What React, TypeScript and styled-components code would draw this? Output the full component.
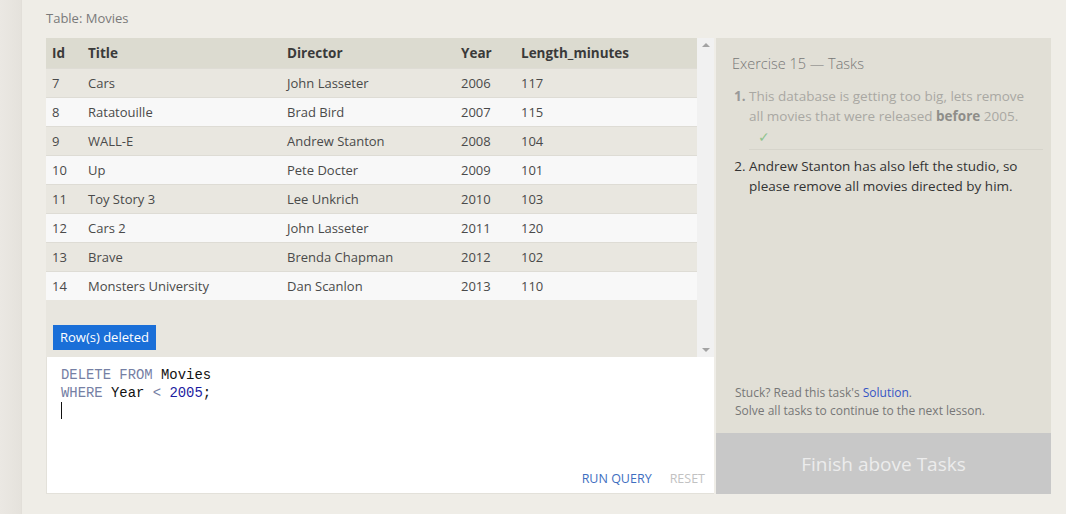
import React from "react";
import styled, { createGlobalStyle } from "styled-components";

const Global = createGlobalStyle`
  html, body { margin: 0; padding: 0; background: #efede7; }
  body { font-family: "Open Sans", "Noto Sans", sans-serif; }
  * { box-sizing: border-box; }
`;

const Page = styled.div`
  display: flex;
  width: 1066px;
  height: 514px;
  overflow: hidden;
`;

const SideStrip = styled.div`
  width: 22px;
  flex: none;
  background: linear-gradient(to right, #ebe8e3, #e5e2dc);
  border-right: 1px solid #e2dfd9;
`;

const Main = styled.div`
  flex: 1;
  padding: 0 14px 0 24px;
  display: flex;
  flex-direction: column;
`;

const Caption = styled.div`
  height: 38px;
  padding-top: 9px;
  font-size: 13px;
  color: #7a7a7a;
`;

const Workspace = styled.div`
  display: flex;
  gap: 2px;
  height: 456px;
`;

const LeftCol = styled.div`
  width: 668px;
  display: flex;
  flex-direction: column;
`;

const Results = styled.div`
  height: 319px;
  display: flex;
  background: #e8e6df;
`;

const TableArea = styled.div`
  flex: 1;
  display: flex;
  flex-direction: column;
  justify-content: space-between;
`;

const Table = styled.table`
  width: 100%;
  border-collapse: collapse;
  font-size: 13px;
`;

const Th = styled.th<{ w: number }>`
  width: ${(p) => p.w}px;
  text-align: left;
  font-weight: 700;
  font-size: 13.5px;
  color: #3a3a3a;
  height: 30px;
  padding: 0 6px;
  background: #dcdbd0;
`;

const Tr = styled.tr<{ alt: boolean }>`
  background: ${(p) => (p.alt ? "#f8f8f8" : "#e9e7e0")};
  border-top: 1px solid #dedcd5;
`;

const Td = styled.td`
  height: 29px;
  padding: 0 6px;
  color: #4a4a4a;
  white-space: nowrap;
`;

const Badge = styled.div`
  align-self: flex-start;
  margin: 0 0 7px 7px;
  background: #1a6fd8;
  color: #fff;
  font-size: 13px;
  height: 25px;
  line-height: 25px;
  padding: 0 7px;
`;

const Scrollbar = styled.div`
  width: 17px;
  background: #f1f1f1;
  display: flex;
  flex-direction: column;
  justify-content: space-between;
  align-items: center;
  padding: 5px 0;
`;

const Arrow = styled.div<{ down?: boolean }>`
  width: 0;
  height: 0;
  border-left: 4px solid transparent;
  border-right: 4px solid transparent;
  ${(p) =>
    p.down
      ? "border-top: 4px solid #a3a3a3;"
      : "border-bottom: 4px solid #a3a3a3;"}
`;

const Editor = styled.div`
  flex: 1;
  background: #fff;
  border-bottom: 1px solid #e3e1da;
  border-left: 1px solid #e3e1da;
  display: flex;
  flex-direction: column;
  justify-content: space-between;
  padding: 9px 0 6px 14px;
`;

const Code = styled.pre`
  margin: 0;
  font-family: "Liberation Mono", "DejaVu Sans Mono", monospace;
  font-size: 13.9px;
  line-height: 18px;
  color: #111;
`;

const Kw = styled.span`
  color: #7580a4;
`;
const Num = styled.span`
  color: #1c1ca0;
`;
const Caret = styled.span`
  display: inline-block;
  width: 1px;
  height: 17px;
  background: #111;
  vertical-align: top;
`;

const Actions = styled.div`
  display: flex;
  justify-content: flex-end;
  gap: 18px;
  padding-right: 9px;
`;

const ActionBtn = styled.span<{ muted?: boolean }>`
  font-size: 12.5px;
  color: ${(p) => (p.muted ? "#c2c2c2" : "#3e6ec0")};
`;

const Tasks = styled.div`
  width: 335px;
  background: #e1dfd6;
  display: flex;
  flex-direction: column;
`;

const TasksBody = styled.div`
  flex: 1;
  padding: 16px 8px 0 16px;
  display: flex;
  flex-direction: column;
`;

const TasksTitle = styled.div`
  font-size: 14.5px;
  font-weight: 300;
  color: #777;
  margin-bottom: 13px;
`;

const TaskList = styled.ol`
  margin: 0;
  padding: 0 14px 0 17px;
  font-size: 13.5px;
  line-height: 20px;
`;

const Task = styled.li<{ done?: boolean }>`
  color: ${(p) => (p.done ? "#a9a8a3" : "#333")};
  padding: 0 0 ${(p) => (p.done ? "4px" : "6px")} 0;
  margin-bottom: 6px;
  margin-right: ${(p) => (p.done ? "-14px" : "0")};
  padding-right: ${(p) => (p.done ? "14px" : "0")};
  border-bottom: ${(p) => (p.done ? "1px solid #d6d4cb" : "none")};
  &::marker {
    font-weight: ${(p) => (p.done ? 700 : 400)};
    color: ${(p) => (p.done ? "#999" : "#333")};
  }
  b {
    color: #8e8d89;
  }
`;

const Check = styled.div`
  color: #8fc38f;
  font-size: 14px;
  line-height: 16px;
  padding: 3px 0 0 9px;
`;

const Help = styled.div`
  margin-top: auto;
  padding: 0 0 13px 3px;
  font-size: 12px;
  line-height: 18px;
  color: #777;
  a {
    color: #3554c4;
    text-decoration: none;
  }
`;

const Finish = styled.div`
  height: 61px;
  background: #c8c8c8;
  color: #ececec;
  font-size: 19px;
  display: flex;
  align-items: center;
  justify-content: center;
`;

const rows = [
  [7, "Cars", "John Lasseter", 2006, 117],
  [8, "Ratatouille", "Brad Bird", 2007, 115],
  [9, "WALL-E", "Andrew Stanton", 2008, 104],
  [10, "Up", "Pete Docter", 2009, 101],
  [11, "Toy Story 3", "Lee Unkrich", 2010, 103],
  [12, "Cars 2", "John Lasseter", 2011, 120],
  [13, "Brave", "Brenda Chapman", 2012, 102],
  [14, "Monsters University", "Dan Scanlon", 2013, 110],
];

export default function App() {
  return (
    <>
      <Global />
      <Page>
        <SideStrip />
        <Main>
          <Caption>Table: Movies</Caption>
          <Workspace>
            <LeftCol>
              <Results>
                <TableArea>
                  <Table>
                    <thead>
                      <tr>
                        <Th w={36}>Id</Th>
                        <Th w={199}>Title</Th>
                        <Th w={174}>Director</Th>
                        <Th w={60}>Year</Th>
                        <Th w={182}>Length_minutes</Th>
                      </tr>
                    </thead>
                    <tbody>
                      {rows.map((r, i) => (
                        <Tr key={i} alt={i % 2 === 1}>
                          {r.map((c, j) => (
                            <Td key={j}>{c}</Td>
                          ))}
                        </Tr>
                      ))}
                    </tbody>
                  </Table>
                  <Badge>Row(s) deleted</Badge>
                </TableArea>
                <Scrollbar>
                  <Arrow />
                  <Arrow down />
                </Scrollbar>
              </Results>
              <Editor>
                <Code>
                  <Kw>DELETE FROM</Kw> Movies{"\n"}
                  <Kw>WHERE</Kw> Year <Kw>&lt;</Kw> <Num>2005</Num>;{"\n"}
                  <Caret />
                </Code>
                <Actions>
                  <ActionBtn>RUN QUERY</ActionBtn>
                  <ActionBtn muted>RESET</ActionBtn>
                </Actions>
              </Editor>
            </LeftCol>
            <Tasks>
              <TasksBody>
                <TasksTitle>Exercise 15 — Tasks</TasksTitle>
                <TaskList>
                  <Task done>
                    This database is getting too big, lets remove all movies
                    that were released <b>before</b> 2005.
                    <Check>✓</Check>
                  </Task>
                  <Task>
                    Andrew Stanton has also left the studio, so please remove
                    all movies directed by him.
                  </Task>
                </TaskList>
                <Help>
                  Stuck? Read this task's <a href="#">Solution</a>.
                  <br />
                  Solve all tasks to continue to the next lesson.
                </Help>
              </TasksBody>
              <Finish>Finish above Tasks</Finish>
            </Tasks>
          </Workspace>
        </Main>
      </Page>
    </>
  );
}
